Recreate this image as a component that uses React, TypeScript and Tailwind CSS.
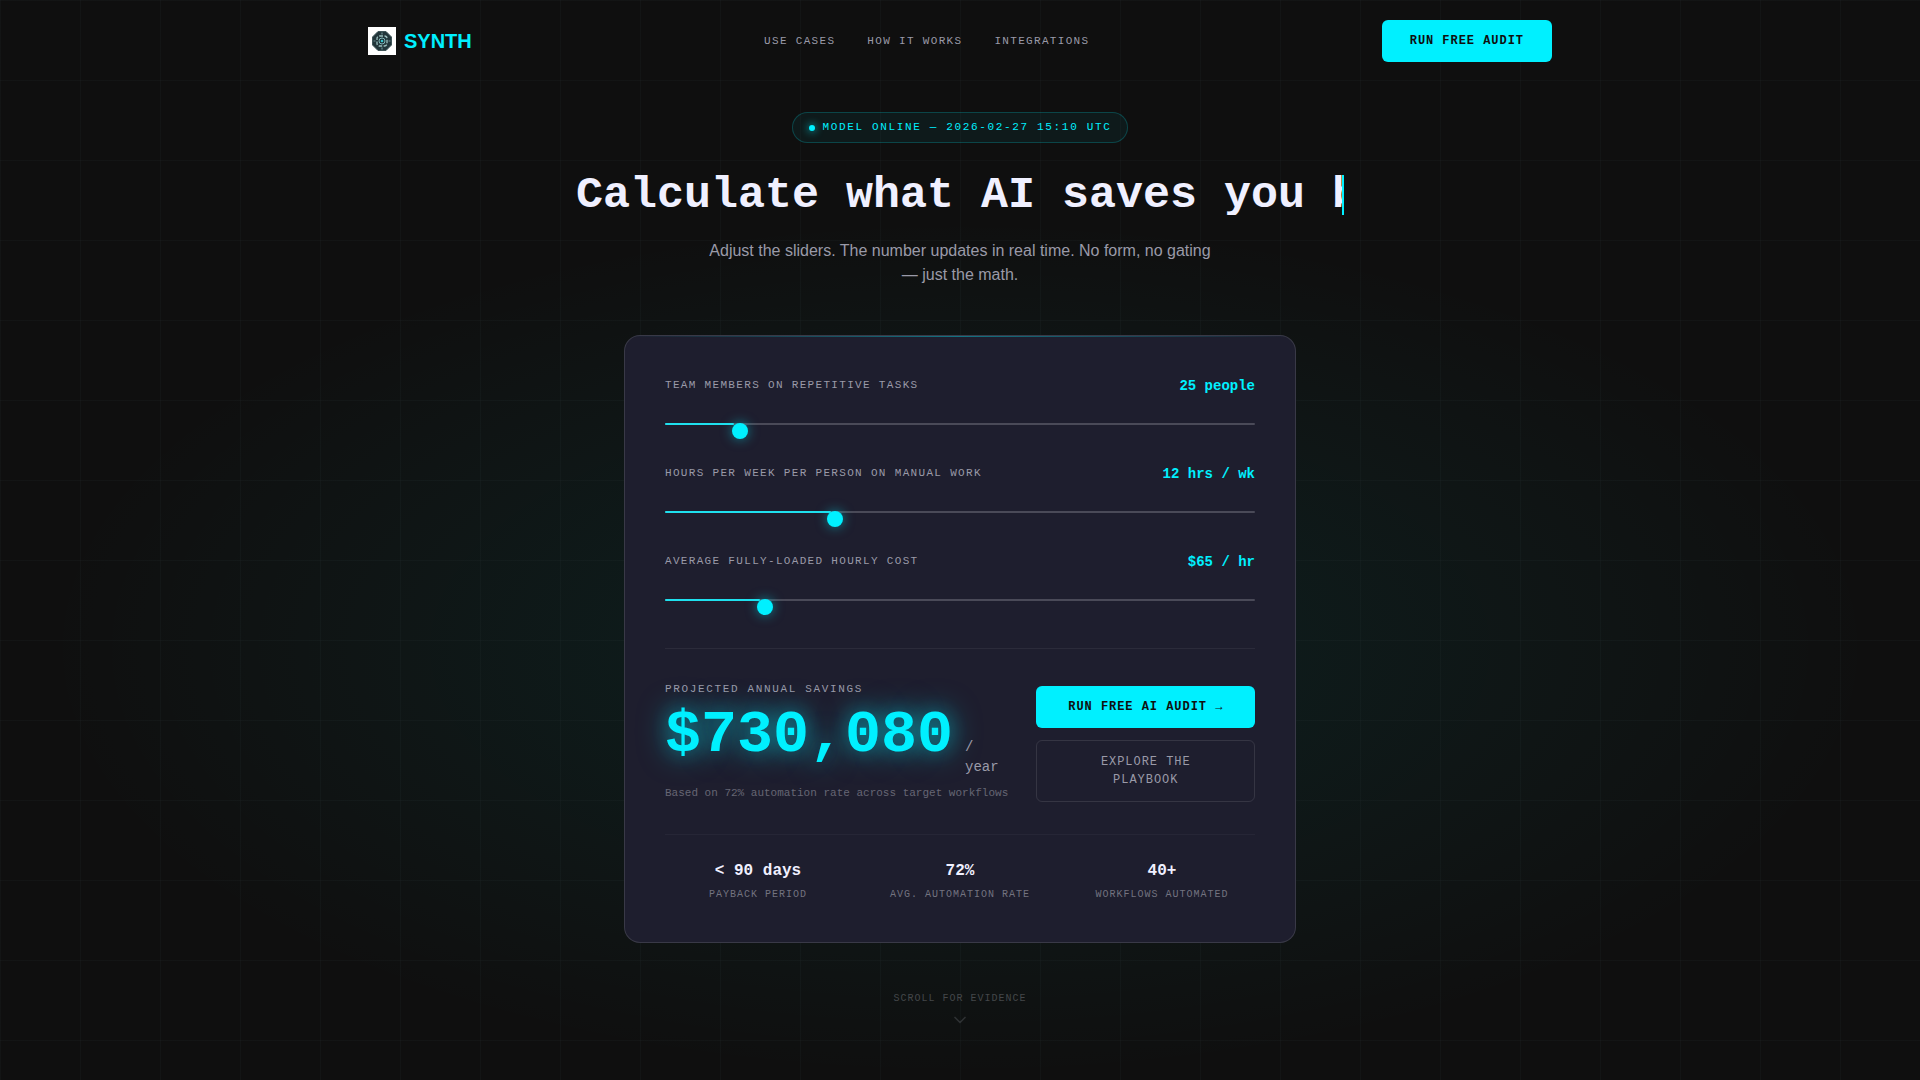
import { useState } from 'react'
import { ChevronDown } from 'lucide-react'

const NAV_LINKS = [
  { label: 'USE CASES', href: '#use-cases' },
  { label: 'HOW IT WORKS', href: '#how-it-works' },
  { label: 'INTEGRATIONS', href: '#integrations' },
]

const STATS = [
  { value: '< 90 days', label: 'PAYBACK PERIOD' },
  { value: '72%', label: 'AVG. AUTOMATION RATE' },
  { value: '40+', label: 'WORKFLOWS AUTOMATED' },
]

const AUTOMATION_RATE = 0.72

function Logo() {
  return (
    <svg viewBox="0 0 28 28" className="w-7 h-7" aria-hidden="true">
      <rect width="28" height="28" fill="#ffffff" />
      <path d="M10 4.500h8l5.500 5.500v8L18 23.500h-8L4.500 18v-8z" fill="#22353a" stroke="#3f5558" strokeWidth="1" strokeLinejoin="round" />
      <rect x="9" y="9" width="10" height="10" rx="2.500" fill="none" stroke="#9cc0bf" strokeWidth="1.300" strokeDasharray="3.500 1.500" />
      <path d="M14 5.500v2M14 20.500v2M5.500 14h2M20.500 14h2" stroke="#6f9093" strokeWidth="1.200" />
      <circle cx="14" cy="14" r="3" fill="#1d3136" stroke="#7fb5b7" strokeWidth="1" />
      <circle cx="14" cy="14" r="1.300" fill="#37c3cc" />
    </svg>
  )
}

type SliderProps = {
  id: string
  label: string
  display: string
  min: number
  max: number
  value: number
  onChange: (v: number) => void
}

function SliderRow({ id, label, display, min, max, value, onChange }: SliderProps) {
  const pct = ((value - min) / (max - min)) * 100
  return (
    <div>
      <div className="flex items-start justify-between gap-4">
        <label htmlFor={id} className="text-[11px] leading-[18px] tracking-[0.12em] text-[#9a9aa8]">
          {label}
        </label>
        <output htmlFor={id} className="text-sm leading-[21px] font-bold text-[#00f0ff]">{display}</output>
      </div>
      <div className="relative h-4 mt-[26px]">
        <div className="absolute inset-x-0 top-0 h-0.5 rounded-full bg-[#4a4a58]">
          <div className="h-full rounded-full bg-[#1fe0ee]" style={{ width: `${pct}%` }} />
        </div>
        <input
          id={id}
          type="range"
          min={min}
          max={max}
          value={value}
          onChange={e => onChange(Number(e.target.value))}
          className="relative block w-full h-4 appearance-none bg-transparent cursor-pointer outline-none [&::-webkit-slider-thumb]:appearance-none [&::-webkit-slider-thumb]:w-4 [&::-webkit-slider-thumb]:h-4 [&::-webkit-slider-thumb]:rounded-full [&::-webkit-slider-thumb]:bg-[#00f0ff] [&::-webkit-slider-thumb]:shadow-[0_0_12px_rgba(0,240,255,0.5)]"
        />
      </div>
    </div>
  )
}

export default function App() {
  const [people, setPeople] = useState(25)
  const [hours, setHours] = useState(12)
  const [cost, setCost] = useState(65)

  const savings = Math.round(people * hours * 52 * cost * AUTOMATION_RATE)

  return (
    <div className="relative min-h-screen overflow-hidden bg-[#0f0f0f] font-['Liberation_Mono',monospace] text-[#f0f0ff]">

      {/* Glow + grid */}
      <div className="absolute inset-0 pointer-events-none bg-[radial-gradient(ellipse_48%_40%_at_50%_60%,rgba(0,240,235,0.08),transparent)]" />
      <div className="absolute inset-0 pointer-events-none bg-[linear-gradient(rgba(180,250,255,0.025)_1px,transparent_1px),linear-gradient(90deg,rgba(180,250,255,0.025)_1px,transparent_1px)] bg-[size:80px_80px]" />

      {/* NAV */}
      <header className="relative max-w-7xl mx-auto px-12 py-5 flex items-center justify-between">
        <a href="#" className="flex items-center gap-2">
          <Logo />
          <span className="font-['Liberation_Sans',sans-serif] text-xl leading-7 font-bold text-[#00f0ff]">SYNTH</span>
        </a>
        <nav className="flex items-center gap-8">
          {NAV_LINKS.map(l => (
            <a key={l.label} href={l.href} className="text-[11px] leading-4 tracking-[0.12em] text-[#9a9aa8] hover:text-white transition-colors">
              {l.label}
            </a>
          ))}
        </nav>
        <button className="px-7 py-3 rounded-md bg-[#00f0ff] text-xs leading-[18px] font-bold tracking-[0.08em] text-[#0f0f0f]">
          RUN FREE AUDIT
        </button>
      </header>

      {/* HERO */}
      <main className="relative flex flex-col items-center px-6 pt-[30px] pb-12">
        <div className="flex items-center gap-2 px-4 py-1.5 rounded-full border border-[#00f0ff]/20 bg-[#00f0ff]/5 text-[11px] leading-[17px] tracking-[0.15em] text-[#00f0ff]">
          <span className="w-1.5 h-1.5 rounded-full bg-[#00f0ff] shadow-[0_0_8px_#00f0ff]" />
          MODEL ONLINE — 2026-02-27 15:10 UTC
        </div>

        {/* Typewriter line, the right border is the caret */}
        <h1 className="mt-8 w-full h-10 max-w-3xl overflow-hidden whitespace-nowrap border-r-2 border-[#00f0ff] text-[45px] leading-[42px] font-bold">
          Calculate what AI saves you b
        </h1>

        <p className="mt-6 max-w-[520px] text-center font-['Liberation_Sans',sans-serif] text-base leading-6 text-[#9a9aa8]">
          Adjust the sliders. The number updates in real time. No form, no gating — just the math.
        </p>

        {/* CALCULATOR */}
        <section aria-label="Savings calculator" className="relative mt-12 w-full max-w-2xl p-10 rounded-2xl border border-white/12 bg-[#1e1e2e] overflow-hidden">
          <div className="absolute inset-x-0 top-0 h-px bg-linear-to-r from-transparent via-[#00f0ff]/40 to-transparent" />

          <div className="flex flex-col gap-[25px]">
            <SliderRow id="people" label="TEAM MEMBERS ON REPETITIVE TASKS" display={`${people} people`} min={2} max={200} value={people} onChange={setPeople} />
            <SliderRow id="hours" label="HOURS PER WEEK PER PERSON ON MANUAL WORK" display={`${hours} hrs / wk`} min={1} max={40} value={hours} onChange={setHours} />
            <SliderRow id="cost" label="AVERAGE FULLY-LOADED HOURLY COST" display={`$${cost} / hr`} min={20} max={300} value={cost} onChange={setCost} />
          </div>

          <div className="mt-[33px] pt-8 border-t border-white/6 grid grid-cols-[1fr_219px] gap-7 items-end">
            <div>
              <p className="text-[11px] leading-4 tracking-[0.15em] text-[#9a9aa8]">PROJECTED ANNUAL SAVINGS</p>
              <div className="mt-2 flex items-baseline gap-3">
                <span className="text-6xl leading-[60px] font-bold text-[#00f0ff] [text-shadow:0_0_30px_rgba(0,240,255,0.5),0_0_20px_rgba(0,240,255,0.3)]">
                  ${savings.toLocaleString('en-US')}
                </span>
                <span className="w-9 text-sm leading-5 text-[#9a9aa8]">/ year</span>
              </div>
              <p className="mt-2 text-[11px] leading-[17px] whitespace-nowrap text-[#666674]">
                Based on 72% automation rate across target workflows
              </p>
            </div>
            <div className="flex flex-col gap-3">
              <button className="px-7 py-3 rounded-md bg-[#00f0ff] text-xs leading-[18px] font-bold tracking-[0.08em] whitespace-nowrap text-[#0f0f0f]">
                RUN FREE AI AUDIT →
              </button>
              <button className="px-7 py-3 rounded-md border border-white/10 text-xs leading-[18px] tracking-[0.08em] text-[#9a9aa8]">
                EXPLORE THE PLAYBOOK
              </button>
            </div>
          </div>

          <div className="mt-8 pt-6 border-t border-white/4 grid grid-cols-3 gap-4 text-center">
            {STATS.map(s => (
              <div key={s.label}>
                <p className="text-base leading-6 font-bold">{s.value}</p>
                <p className="mt-1 text-[10px] leading-[15px] tracking-[0.1em] text-[#737380]">{s.label}</p>
              </div>
            ))}
          </div>
        </section>

        <div className="mt-12 flex flex-col items-center gap-1 text-[#44474a]">
          <span className="text-[10px] leading-[15px] tracking-[0.1em]">SCROLL FOR EVIDENCE</span>
          <ChevronDown size={20} className="opacity-60" />
        </div>
      </main>
    </div>
  )
}
